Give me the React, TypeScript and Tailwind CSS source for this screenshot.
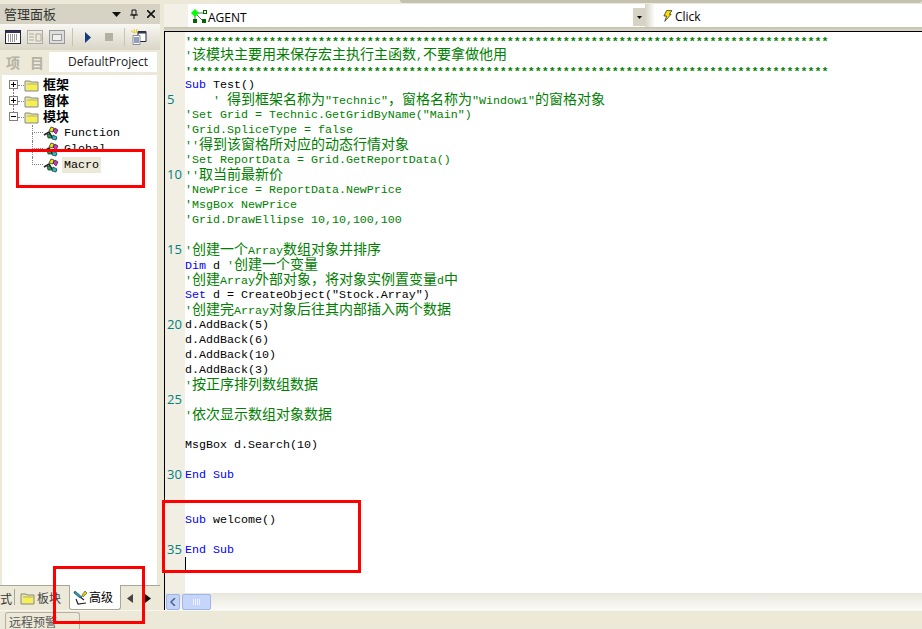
const mono = "font-['Liberation_Mono','Noto_Sans_CJK_SC',monospace]";

const stars = "*".repeat(91);

type Line = { t: string; c?: "g" | "b" | "k"; star?: boolean; parts?: { t: string; c: "g" | "b" | "k" }[] };

const lines: Line[] = [
  { t: "'" + stars, c: "g", star: true },
  { t: "'该模块主要用来保存宏主执行主函数,不要拿做他用", c: "g" },
  { t: "'" + stars, c: "g", star: true },
  { t: "", parts: [{ t: "Sub", c: "b" }, { t: " Test()", c: "k" }] },
  { t: "    ' 得到框架名称为\"Technic\"，窗格名称为\"Window1\"的窗格对象", c: "g" },
  { t: "'Set Grid = Technic.GetGridByName(\"Main\")", c: "g" },
  { t: "'Grid.SpliceType = false", c: "g" },
  { t: "''得到该窗格所对应的动态行情对象", c: "g" },
  { t: "'Set ReportData = Grid.GetReportData()", c: "g" },
  { t: "''取当前最新价", c: "g" },
  { t: "'NewPrice = ReportData.NewPrice", c: "g" },
  { t: "'MsgBox NewPrice", c: "g" },
  { t: "'Grid.DrawEllipse 10,10,100,100", c: "g" },
  { t: "" },
  { t: "'创建一个Array数组对象并排序", c: "g" },
  { t: "", parts: [{ t: "Dim", c: "b" }, { t: " d ", c: "k" }, { t: "'创建一个变量", c: "g" }] },
  { t: "'创建Array外部对象，将对象实例置变量d中", c: "g" },
  { t: "", parts: [{ t: "Set", c: "b" }, { t: " d = CreateObject(\"Stock.Array\")", c: "k" }] },
  { t: "'创建完Array对象后往其内部插入两个数据", c: "g" },
  { t: "d.AddBack(5)", c: "k" },
  { t: "d.AddBack(6)", c: "k" },
  { t: "d.AddBack(10)", c: "k" },
  { t: "d.AddBack(3)", c: "k" },
  { t: "'按正序排列数组数据", c: "g" },
  { t: "" },
  { t: "'依次显示数组对象数据", c: "g" },
  { t: "" },
  { t: "MsgBox d.Search(10)", c: "k" },
  { t: "" },
  { t: "", parts: [{ t: "End Sub", c: "b" }] },
  { t: "" },
  { t: "" },
  { t: "", parts: [{ t: "Sub", c: "b" }, { t: " welcome()", c: "k" }] },
  { t: "" },
  { t: "", parts: [{ t: "End Sub", c: "b" }] },
];

const colorOf = { g: "text-[#008000]", b: "text-[#0000ff]", k: "text-black" };

// latin runs are 7px wide per char, cjk runs 14px
const Run = ({ t, c }: { t: string; c: "g" | "b" | "k" }) => (
  <span className={colorOf[c]}>
    {t.split(/([\u2E80-\uFFFF]+)/).map((s, i) =>
      /[\u2E80-\uFFFF]/.test(s) ? (
        <span key={i} className="text-[14px]">{s}</span>
      ) : (
        <span key={i}>{s}</span>
      )
    )}
  </span>
);

const CodeLine = ({ line, n }: { line: Line; n: number }) => (
  <div className="flex h-[15px] leading-[15px]">
    <div className="w-[20px] shrink-0 pl-[2px] bg-[#f1efe4] text-[#008080] text-[13px] font-['Open_Sans',sans-serif]">
      {n % 5 === 0 ? n : ""}
    </div>
    <div className={`h-[15px] whitespace-pre text-[11.67px] ${line.star ? "leading-[21px] font-bold" : "leading-[17px]"} ${mono}`}>
      {line.parts
        ? line.parts.map((p, i) => <Run key={i} t={p.t} c={p.c} />)
        : line.c && <Run t={line.t} c={line.c} />}
    </div>
  </div>
);

const Folder = () => (
  <svg width="15" height="14" viewBox="0 0 15 14" className="shrink-0">
    <path d="M1 3h5l1 1h7v9H1z" fill="#e8e6b0" stroke="#8a8a70" />
    <rect x="3" y="6" width="10" height="6" fill="#f5ef50" />
    <path d="M3 6h10" stroke="#b8b060" />
  </svg>
);

const Macro = () => (
  <svg width="16" height="15" viewBox="0 0 16 15" className="shrink-0">
    <path d="M1 9l5-3 3 5" stroke="#222" strokeWidth="1.600" fill="none" />
    <path d="M6 5l2-4 3 1-1 4z" fill="#e8e800" stroke="#222" strokeWidth=".7" />
    <path d="M10 5l2-3 3 2-2 4z" fill="#d030d0" stroke="#222" strokeWidth=".7" />
    <path d="M4 8l3 0 2 4-4 0z" fill="#20a050" stroke="#222" strokeWidth=".7" />
    <path d="M10 9l4 2-1 3-4-1z" fill="#20c0d0" stroke="#222" strokeWidth=".7" />
  </svg>
);

const PlusBox = ({ minus }: { minus?: boolean }) => (
  <div className="w-[9px] h-[9px] border border-[#808080] bg-white flex items-center justify-center relative shrink-0">
    <div className="w-[5px] h-px bg-black" />
    {!minus && <div className="absolute w-px h-[5px] bg-black" />}
  </div>
);

const TreeRoot = ({ label, minus, first }: { label: string; minus?: boolean; first?: boolean }) => (
  <div className="flex items-center h-[16px] pl-[7px]">
    <div className="w-[9px] h-[16px] flex flex-col items-center shrink-0">
      <div className={`h-[3px] ${first ? "" : "border-l border-dotted border-[#808080]"}`} />
      <PlusBox minus={minus} />
      <div className={`h-[4px] ${minus ? "" : "border-l border-dotted border-[#808080]"}`} />
    </div>
    <div className="w-[6px] border-t border-dotted border-[#808080]" />
    <Folder />
    <span className="ml-[4px] pb-[2px] text-[13px] leading-[16px] font-bold text-black">{label}</span>
  </div>
);

const TreeLeaf = ({ label, selected, last }: { label: string; selected?: boolean; last?: boolean }) => (
  <div className="flex items-center h-[16px] pl-[30px]">
    <div className="w-[11px] h-[16px] flex flex-col shrink-0">
      <div className="h-[8px] border-l border-b border-dotted border-[#808080]" />
      <div className={`h-[8px] ${last ? "" : "border-l border-dotted border-[#808080]"}`} />
    </div>
    <Macro />
    <span className={`ml-[3px] px-[2px] text-[11.67px] leading-[16px] text-black ${mono} ${selected ? "bg-[#ece9d8]" : ""}`}>
      {label}
    </span>
  </div>
);

const RedBox = ({ cls }: { cls: string }) => (
  <div className={`absolute border-[3px] border-[#ff0000] pointer-events-none ${cls}`} />
);

const Toolbar = () => (
  <div className="h-[26px] flex items-center pl-[5px] bg-gradient-to-b from-[#f9f8f3] to-[#d9d6c6]">
    <svg width="16" height="14" viewBox="0 0 16 14" className="shrink-0">
      <rect x=".5" y=".5" width="15" height="13" fill="#fff" stroke="#223" />
      <rect x=".5" y=".5" width="15" height="2.500" fill="#335" />
      <path d="M3 5h10M3 7h10M3 9h10M3 11h7" stroke="#333" strokeDasharray="1 1" />
    </svg>
    <svg width="16" height="14" viewBox="0 0 16 14" className="ml-[6px] shrink-0">
      <rect x=".5" y=".5" width="15" height="13" fill="#ece9d8" stroke="#aaa" />
      <path d="M2 4h5M2 7h5M2 10h5M9 4h5v7H9z" stroke="#aaa" fill="none" />
    </svg>
    <svg width="16" height="14" viewBox="0 0 16 14" className="ml-[6px] shrink-0">
      <rect x=".5" y=".5" width="15" height="13" fill="#ddd" stroke="#999" />
      <rect x="3.500" y="4.500" width="9" height="6" fill="#eee" stroke="#999" />
    </svg>
    <div className="w-px h-[18px] bg-[#c8c5b4] ml-[7px] shrink-0" />
    <svg width="6" height="11" viewBox="0 0 6 11" className="ml-[12px] shrink-0">
      <path d="M0 0l6 5.500-6 5.500z" fill="#1a3a80" />
    </svg>
    <div className="w-[8px] h-[8px] bg-[#b3b0a4] ml-[14px] shrink-0" />
    <div className="w-px h-[18px] bg-[#c8c5b4] ml-[11px] shrink-0" />
    <svg width="16" height="16" viewBox="0 0 16 16" className="ml-[6px] shrink-0">
      <path d="M7 2.500h8v10H7z" fill="#fff" stroke="#224" />
      <path d="M7 2.500h8v2H7z" fill="#335" />
      <path d="M2 6.500h7v9H2z" fill="#ffffe0" stroke="#88a" />
      <path d="M3 9h5M3 11h5M3 13h5" stroke="#2040a0" />
      <path d="M3 0l1 4M0 2l4 2M6 0L5 4" stroke="#e8d000" />
    </svg>
  </div>
);

const App = () => {
  return (
    <div className="relative w-[922px] h-[629px] overflow-hidden flex flex-col bg-[#ece9d8] font-['Noto_Sans_CJK_SC',sans-serif]">
      <div className="flex h-[610px]">
        {/* left panel */}
        <div className="w-[160px] shrink-0 flex flex-col pt-[4px]">
          <div className="h-[20px] flex items-center bg-[#d6d3c4] pl-[4px] pr-[3px] text-[13px] text-[#333]">
            <span className="flex-1 leading-[20px]">管理面板</span>
            <svg width="9" height="5" viewBox="0 0 9 5" className="mr-[9px]"><path d="M0 0h9L4.500 5z" fill="#111" /></svg>
            <svg width="8" height="10" viewBox="0 0 8 10" className="mr-[9px]">
              <path d="M2 1h4v5H2zM0 6h8M4 6v4" stroke="#111" fill="none" />
            </svg>
            <svg width="8" height="8" viewBox="0 0 8 8" className="mr-[2px]">
              <path d="M0 0l8 8M8 0L0 8" stroke="#111" strokeWidth="1.600" />
            </svg>
          </div>
          <Toolbar />
          <div className="h-[22px] flex items-end">
            <span className="w-[49px] pl-[6px] text-[14px] font-bold text-[#b5b2a4] tracking-[10px] leading-[20px] whitespace-nowrap">项目</span>
            <span className="w-[108px] h-[20px] bg-white pl-[19px] text-[12px] leading-[20px] text-[#222] font-['Open_Sans',sans-serif]">
              DefaultProject
            </span>
          </div>
          <div className="flex-1 ml-[2px] mr-[3px] mt-[3px] bg-white pt-[2px]">
            <TreeRoot label="框架" first />
            <TreeRoot label="窗体" />
            <TreeRoot label="模块" minus />
            <TreeLeaf label="Function" />
            <TreeLeaf label="Global" />
            <TreeLeaf label="Macro" selected last />
          </div>
          {/* bottom tabs */}
          <div className="h-[25px] flex items-start border-t border-[#a8a696] text-[12px] text-[#333] leading-[20px]">
            <span className="w-[14px] whitespace-nowrap pt-[3px]">式</span>
            <div className="w-px h-[16px] bg-[#a8a696] mt-[3px]" />
            <div className="flex items-center ml-[5px] pt-[2px] w-[49px] shrink-0">
              <Folder />
              <span className="ml-[2px] text-[#444]">板块</span>
            </div>
            <div className="w-[52px] h-[25px] -mt-px bg-white border border-t-0 border-[#a8a696] rounded-b-[3px] flex items-center pl-[3px] text-black">
              <svg width="16" height="15" viewBox="0 0 16 15" className="shrink-0">
                <path d="M1 2l10 8M3 9l2 5 8-1" stroke="#222" strokeWidth="1.200" fill="none" />
                <path d="M2 1l7 6-2 1-6-5z" fill="#20a0c0" stroke="#222" strokeWidth=".5" />
                <path d="M12 1l2 2-4 4-1-2z" fill="#e8d000" stroke="#222" strokeWidth=".5" />
              </svg>
              <span>高级</span>
            </div>
            <svg width="6" height="9" viewBox="0 0 6 9" className="ml-[6px] mt-[8px]"><path d="M6 0v9L0 4.500z" fill="#444" /></svg>
            <svg width="6" height="9" viewBox="0 0 6 9" className="ml-[12px] mt-[8px]"><path d="M0 0v9l6-4.500z" fill="#111" /></svg>
          </div>
        </div>

        {/* editor */}
        <div className="flex-1 flex flex-col ml-[4px] min-w-0">
          <div className="h-[4px] flex justify-end shrink-0">
            <div className="w-[522px] h-[3px] bg-[#c4c1b0] rounded-b-[3px]" />
          </div>
          <div className="h-[23px] flex bg-white shrink-0 text-[12px] leading-[23px] text-black font-['Open_Sans',sans-serif]">
            <div className="w-[24px] bg-[#f3f1e7]" />
            <div className="w-[445px] pl-[3px] pt-[1px] flex items-center">
              <svg width="16" height="15" viewBox="0 0 16 15" className="shrink-0">
                <path d="M4 4l10 0M4 4l0 8M4 4l8 8" stroke="#666" />
                <path d="M4 0l4 4-4 4-4-4z" fill="#00ff00" />
                <rect x="12.500" y="1.500" width="3" height="3" fill="#fff" stroke="#060" />
                <rect x="2" y="10" width="4" height="4" fill="#060" />
                <rect x="11" y="10" width="4" height="4" fill="#060" />
              </svg>
              <span className="pl-[1px] pt-[2px]">AGENT</span>
            </div>
            <div className="w-[12px] h-[18px] mt-[4px] bg-[#d6d3c4] flex items-center justify-center">
              <svg width="5" height="3" viewBox="0 0 5 3"><path d="M0 0h5L2.500 3z" fill="#000" /></svg>
            </div>
            <div className="w-[10px] bg-gradient-to-r from-[#d6d3c4] to-white" />
            <div className="flex-1 pl-[8px] flex items-center">
              <svg width="9" height="12" viewBox="0 0 10 12" className="shrink-0 mr-[3px]">
                <path d="M4 0h6L7 4h2L2 12l2-6H1z" fill="#ffe000" stroke="#222" strokeWidth=".8" />
              </svg>
              <span className="pt-[2px]">Click</span>
            </div>
          </div>
          <div className="h-[4px] shrink-0 bg-gradient-to-b from-[#c4c1b0] to-[#dcd9ca]" />
          <div className="flex-1 min-h-0 border-t border-l border-black bg-white flex flex-col">
            <div className="flex-1 min-h-0 overflow-hidden bg-white">
              {lines.map((l, i) => (
                <CodeLine key={i} line={l} n={i + 1} />
              ))}
              <div className="flex h-[15px]">
                <div className="w-[20px] bg-[#f1efe4]" />
                <div className="w-px h-[15px] bg-black" />
              </div>
              <div className="w-[20px] h-[30px] bg-[#f1efe4]" />
            </div>
            <div className="h-[17px] shrink-0 flex items-stretch bg-gradient-to-b from-[#e8e6dc] to-[#fbfbf6] pl-px pt-px">
              <div className="w-[14px] bg-[#c2d3f7] border border-[#9db5e8] rounded-[2px] flex items-center justify-center">
                <svg width="6" height="8" viewBox="0 0 6 8"><path d="M5 0L1 4l4 4" stroke="#4d6185" strokeWidth="1.500" fill="none" /></svg>
              </div>
              <div className="w-[29px] ml-[2px] bg-[#c6d6fb] border border-[#9db5e8] rounded-[2px] flex items-center justify-center gap-px">
                <div className="w-px h-[6px] bg-[#eef3ff]" />
                <div className="w-px h-[6px] bg-[#eef3ff]" />
                <div className="w-px h-[6px] bg-[#eef3ff]" />
                <div className="w-px h-[6px] bg-[#eef3ff]" />
              </div>
            </div>
          </div>
        </div>
      </div>

      {/* status strip */}
      <div className="flex-1 flex items-end pl-[5px] border-t border-[#f7f6f0]">
        <div className="h-[17px] w-[75px] border border-b-0 border-[#b5b2a4] rounded-t-[3px] pl-[3px] text-[12px] leading-[17px] text-[#555]">
          远程预警
        </div>
      </div>

      <RedBox cls="left-[16px] top-[149px] w-[129px] h-[39px]" />
      <RedBox cls="left-[53px] top-[566px] w-[92px] h-[58px]" />
      <RedBox cls="left-[162px] top-[500px] w-[199px] h-[73px]" />
    </div>
  );
};

export default App;
